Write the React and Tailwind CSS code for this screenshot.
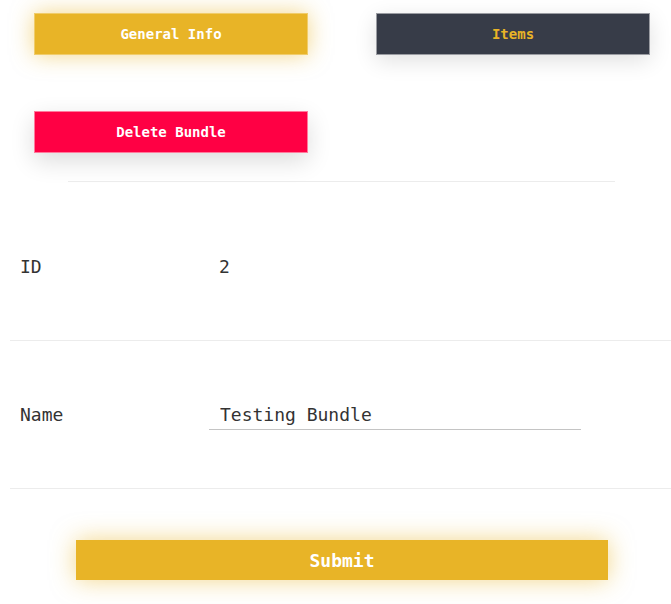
// App.jsx
const mono = { fontFamily: '"DejaVu Sans Mono", "Liberation Mono", monospace' };

// ── Top action buttons ────────────────────────────────────────
function TabButton({ children, className }) {
  return (
    <button
      className={`w-[274px] h-[42px] flex items-center justify-center text-[14px] font-bold border ${className}`}
    >
      {children}
    </button>
  );
}

// ── Form row ──────────────────────────────────────────────────
function Row({ label, children, className = "" }) {
  return (
    <div className={`h-[148px] flex items-center border-b border-[#ececec] ${className}`}>
      <div className="w-[199px] pl-[10px] text-[18px] text-[#333]">{label}</div>
      <div className="flex-1">{children}</div>
    </div>
  );
}

export default function App() {
  return (
    <div className="w-[671px] h-[604px] bg-white overflow-hidden" style={mono}>
      <div className="flex gap-[68px] pl-[34px] pt-[13px]">
        <TabButton className="bg-[#e8b427] text-white border-[#f0cc6a] shadow-[0_0_22px_rgba(232,180,39,0.55)]">
          General Info
        </TabButton>
        <TabButton className="bg-[#373c48] text-[#e8b427] font-semibold border-[#9a9ca2] shadow-[0_6px_22px_rgba(0,0,0,0.12)]">
          Items
        </TabButton>
      </div>

      <div className="pl-[34px] pt-[56px]">
        <TabButton className="bg-[#ff0044] text-white border-[#ff7a9c] shadow-[0_8px_24px_rgba(0,0,0,0.14)]">
          Delete Bundle
        </TabButton>
      </div>

      <div className="mt-[28px] ml-[68px] w-[547px] border-t border-[#ececec]" />

      <div className="ml-[10px] mt-[11px]">
        <Row label="ID">
          <span className="pl-[10px] text-[18px] text-[#333]">2</span>
        </Row>
        <Row label="Name">
          <input
            defaultValue="Testing Bundle"
            className="w-[372px] h-[30px] pl-[11px] text-[18px] text-[#333] border-b border-[#c4c4c4] outline-none bg-transparent"
            style={mono}
          />
        </Row>
      </div>

      <div className="pl-[76px] pt-[51px]">
        <button className="w-[532px] h-[40px] flex items-center justify-center bg-[#e8b427] text-white text-[18px] font-bold shadow-[0_0_24px_rgba(232,180,39,0.55)]">
          Submit
        </button>
      </div>
    </div>
  );
}
